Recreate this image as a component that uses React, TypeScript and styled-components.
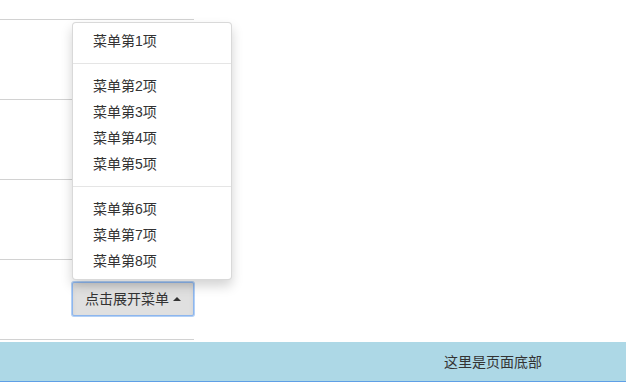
import React from "react";
import styled, { createGlobalStyle } from "styled-components";

const GlobalStyle = createGlobalStyle`
    html, body {
        margin: 0;
        padding: 0;
        background: #fff;
    }
    body {
        font-family: "Liberation Sans", "Noto Sans CJK SC", sans-serif;
        font-size: 14px;
        line-height: 20px;
        color: #333;
    }
`;

const Page = styled.div`
    display: flex;
    flex-direction: column;
    width: 626px;
    height: 382px;
    overflow: hidden;
`;

const Main = styled.div`
    flex: 1;
    width: 194px;
`;

const Row = styled.div<{ $h: number }>`
    box-sizing: border-box;
    height: ${p => p.$h}px;
    border-bottom: 1px solid #d2d2d2;
`;

const ButtonRow = styled.div`
    box-sizing: border-box;
    height: 80px;
    padding: 22px 0 0 72px;
    border-bottom: 1px solid #d2d2d2;
`;

const Dropup = styled.div`
    position: relative;
    display: inline-block;
`;

const Toggle = styled.button`
    display: inline-flex;
    align-items: center;
    gap: 4px;
    box-sizing: border-box;
    height: 34px;
    padding: 6px 12px;
    font-family: inherit;
    font-size: 14px;
    line-height: 20px;
    color: #333;
    background: #e0e0e0;
    border: 1px solid #8db6ee;
    border-radius: 2px;
    box-shadow: 0 0 0 1px #b3d0f5, inset 0 3px 5px rgba(0, 0, 0, 0.06);
    cursor: pointer;
`;

const Caret = styled.span`
    width: 0;
    height: 0;
    border-left: 4px solid transparent;
    border-right: 4px solid transparent;
    border-bottom: 4px solid #333;
`;

const Menu = styled.ul`
    position: absolute;
    left: 0;
    bottom: 100%;
    margin: 0 0 2px;
    padding: 5px 0;
    min-width: 160px;
    box-sizing: border-box;
    list-style: none;
    background: #fff;
    border: 1px solid rgba(0, 0, 0, 0.15);
    border-radius: 4px;
    box-shadow: 0 6px 12px rgba(0, 0, 0, 0.175);
`;

const Item = styled.li`
    padding: 3px 20px;
    line-height: 20px;
    white-space: nowrap;
    color: #333;
`;

const Divider = styled.li`
    height: 1px;
    margin: 9px 0;
    background: #e5e5e5;
`;

const Footer = styled.footer`
    box-sizing: border-box;
    height: 40px;
    padding-left: 444px;
    display: flex;
    align-items: center;
    background: #add8e6;
    border-bottom: 1px solid #5f9fe6;
    box-shadow: 0 2px 0 #10233f;
    color: #333;
`;

const groups = [[1], [2, 3, 4, 5], [6, 7, 8]];

const App = () => {
    return (
        <Page>
            <GlobalStyle />
            <Main>
                <Row $h={20} />
                <Row $h={80} />
                <Row $h={80} />
                <Row $h={80} />
                <ButtonRow>
                    <Dropup>
                        <Menu>
                            {groups.map((g, i) => (
                                <React.Fragment key={i}>
                                    {i > 0 && <Divider />}
                                    {g.map(n => <Item key={n}>菜单第{n}项</Item>)}
                                </React.Fragment>
                            ))}
                        </Menu>
                        <Toggle>点击展开菜单<Caret /></Toggle>
                    </Dropup>
                </ButtonRow>
            </Main>
            <Footer>这里是页面底部</Footer>
        </Page>
    )
}

export default App
